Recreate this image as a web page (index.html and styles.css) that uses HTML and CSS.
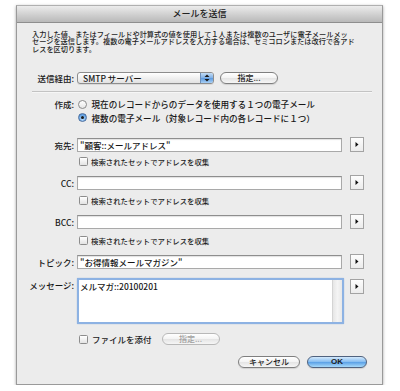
FILE: index.html
```
<!DOCTYPE html>
<html lang="ja">
<head>
<meta charset="utf-8">
<link rel="stylesheet" href="styles.css">
</head>
<body>
<div class="win">
  <div class="titlebar">メールを送信</div>
  <div class="content">
    <div class="desc">
      <div class="dline">入力した値、またはフィールドや計算式の値を使用して１人または複数のユーザに電子メールメッ</div>
      <div class="dline">セージを送信します。複数の電子メールアドレスを入力する場合は、セミコロンまたは改行で各アド</div>
      <div class="dline">レスを区切ります。</div>
    </div>

    <div class="row via">
      <span class="label">送信経由:</span>
      <div class="popup"><span class="popup-text">SMTP サーバー</span><span class="stepper"><svg width="6" height="8" viewBox="0 0 6 8"><path d="M3 0.5L5.5 3H0.5z M3 7.5L5.5 5H0.5z" fill="#1a1a1a"/></svg></span></div>
      <span class="btn btn-spec">指定...</span>
    </div>

    <div class="sep"></div>

    <div class="row opt opt1">
      <span class="label">作成:</span>
      <span class="radio"></span>
      <span class="opt-text">現在のレコードからのデータを使用する１つの電子メール</span>
    </div>
    <div class="row opt opt2">
      <span class="label"></span>
      <span class="radio on"><span class="dot"></span></span>
      <span class="opt-text">複数の電子メール（対象レコード内の各レコードに１つ）</span>
    </div>

    <div class="row field-row to">
      <span class="label">宛先:</span>
      <div class="field">"顧客::メールアドレス"</div>
      <span class="arrow"><svg width="4" height="5" viewBox="0 0 4 5"><path d="M0.5 0L3.5 2.5L0.5 5z" fill="#111"/></svg></span>
    </div>
    <div class="row check-row c1">
      <span class="label"></span>
      <span class="check"></span>
      <span class="check-text">検索されたセットでアドレスを収集</span>
    </div>

    <div class="row field-row cc">
      <span class="label">CC:</span>
      <div class="field"></div>
      <span class="arrow"><svg width="4" height="5" viewBox="0 0 4 5"><path d="M0.5 0L3.5 2.5L0.5 5z" fill="#111"/></svg></span>
    </div>
    <div class="row check-row c2">
      <span class="label"></span>
      <span class="check"></span>
      <span class="check-text">検索されたセットでアドレスを収集</span>
    </div>

    <div class="row field-row bcc">
      <span class="label">BCC:</span>
      <div class="field"></div>
      <span class="arrow"><svg width="4" height="5" viewBox="0 0 4 5"><path d="M0.5 0L3.5 2.5L0.5 5z" fill="#111"/></svg></span>
    </div>
    <div class="row check-row c3">
      <span class="label"></span>
      <span class="check"></span>
      <span class="check-text">検索されたセットでアドレスを収集</span>
    </div>

    <div class="row field-row topic">
      <span class="label">トピック:</span>
      <div class="field">"お得情報メールマガジン"</div>
      <span class="arrow"><svg width="4" height="5" viewBox="0 0 4 5"><path d="M0.5 0L3.5 2.5L0.5 5z" fill="#111"/></svg></span>
    </div>

    <div class="row msg-row">
      <span class="label">メッセージ:</span>
      <div class="msg"><span class="msg-text">メルマガ::20100201</span><span class="scroll"></span></div>
      <span class="arrow"><svg width="4" height="5" viewBox="0 0 4 5"><path d="M0.5 0L3.5 2.5L0.5 5z" fill="#111"/></svg></span>
    </div>

    <div class="row file-row">
      <span class="label"></span>
      <span class="check"></span>
      <span class="check-text file-text">ファイルを添付</span>
      <span class="btn btn-disabled">指定...</span>
    </div>

    <div class="actions">
      <span class="btn btn-cancel">キャンセル</span>
      <span class="btn btn-ok">OK</span>
    </div>
    <div class="grip"><svg width="9" height="9" viewBox="0 0 9 9"><path d="M8.5 1.5L1.5 8.5M8.5 4.5L4.5 8.5M8.5 7L7 8.5" stroke="#a8a8a8" stroke-width="0.8"/></svg></div>
  </div>
</div>
</body>
</html>
```
FILE: styles.css
```
* { box-sizing: border-box; }
html, body { margin: 0; padding: 0; background: #ffffff; }
body {
  padding: 5px 0 0 16px;
  font-family: "Noto Sans CJK JP", "Noto Sans", sans-serif;
  font-weight: 500;
  color: #161616;
}
.win {
  position: relative;
  width: 367px;
  height: 380px;
  background: #ececec;
  border: 1px solid #9a9a9a;
  border-top-color: #b0b0b0;
  box-shadow: 0 1px 3px rgba(0,0,0,0.35);
  display: flex;
  flex-direction: column;
}
.titlebar {
  height: 17px;
  flex: none;
  background: linear-gradient(#ececec, #d2d2d2 50%, #b9b9b9);
  border-bottom: 1px solid #8e8e8e;
  text-align: center;
  font-size: 9px;
  line-height: 16px;
  color: #222;
}
.content {
  position: relative;
  flex: 1;
  display: flex;
  flex-direction: column;
}
.desc {
  margin: 7.5px 0 0 15px;
  flex: none;
}
.dline {
  height: 7.5px;
  font-size: 7.2px;
  line-height: 7.5px;
  white-space: nowrap;
  color: #1e1e1e;
}
.row {
  display: flex;
  align-items: center;
  flex: none;
}
.label {
  width: 60px;
  flex: none;
  text-align: right;
  font-size: 8.5px;
  line-height: 12px;
  padding-right: 3px;
  white-space: nowrap;
}
.via { margin-top: 18px; height: 13px; }
.popup {
  width: 137px;
  height: 12px;
  border: 1px solid #8d8d8d;
  border-radius: 3px;
  background: linear-gradient(#ffffff, #f0f0f0 50%, #e2e2e2);
  display: flex;
  align-items: center;
  overflow: hidden;
  box-shadow: 0 1px 0 rgba(0,0,0,0.08);
}
.popup-text {
  flex: 1;
  font-size: 8.5px;
  line-height: 10px;
  padding-left: 5px;
  white-space: nowrap;
}
.stepper {
  width: 13px;
  height: 100%;
  background: linear-gradient(#c3dcf5, #7fb0e6 50%, #5a98de 51%, #a9d0f5);
  border-left: 1px solid #6e8fb8;
  display: flex;
  align-items: center;
  justify-content: center;
}
.btn {
  display: flex;
  align-items: center;
  justify-content: center;
  height: 12px;
  border: 1px solid #7f7f7f;
  border-radius: 7px;
  background: linear-gradient(#ffffff, #f3f3f3 50%, #e4e4e4 51%, #f6f6f6);
  font-size: 8px;
  line-height: 10px;
  color: #1c1c1c;
  box-shadow: 0 1px 1px rgba(0,0,0,0.12);
}
.btn-spec { width: 58px; margin-left: 6px; }
.sep {
  margin: 6.5px 10px 0 15px;
  height: 1px;
  background: #c3c3c3;
  border-bottom: 1px solid #f6f6f6;
  box-sizing: content-box;
  flex: none;
}
.opt { height: 12px; }
.opt1 { margin-top: 5.5px; }
.opt2 { margin-top: 1.5px; }
.radio {
  width: 9px;
  height: 9px;
  border-radius: 50%;
  border: 1px solid #8a8a8a;
  background: linear-gradient(#ffffff, #e6e6e6);
  margin-left: 1px;
  flex: none;
  display: flex;
  align-items: center;
  justify-content: center;
}
.radio.on {
  border-color: #4b6e9e;
  background: radial-gradient(circle at 50% 70%, #bfe0ff, #6aa7e6 60%, #4a86cc);
}
.dot {
  width: 3.5px;
  height: 3.5px;
  border-radius: 50%;
  background: #1a1a1a;
}
.opt-text {
  font-size: 8.6px;
  line-height: 12px;
  margin-left: 4.5px;
  white-space: nowrap;
}
.field-row { height: 15px; }
.to { margin-top: 13.5px; }
.cc { margin-top: 7.5px; }
.bcc { margin-top: 7.5px; }
.topic { margin-top: 7.5px; }
.field {
  width: 265px;
  height: 14px;
  background: #ffffff;
  border: 1px solid #a9a9a9;
  border-top-color: #8e8e8e;
  box-shadow: inset 0 1px 1px rgba(0,0,0,0.12);
  font-size: 8.5px;
  line-height: 12px;
  padding-left: 2px;
  white-space: nowrap;
}
.arrow {
  width: 14px;
  height: 15px;
  margin-left: 8px;
  border: 1px solid #a3a3a3;
  background: linear-gradient(#fdfdfd, #ececec);
  display: flex;
  align-items: center;
  justify-content: center;
  flex: none;
}
.check-row { height: 12px; }
.c1 { margin-top: 3.5px; }
.c2 { margin-top: 4.5px; }
.c3 { margin-top: 5.5px; }
.check {
  width: 9px;
  height: 9px;
  border: 1px solid #8c8c8c;
  border-radius: 1.5px;
  background: linear-gradient(#ffffff, #e3e3e3);
  margin-left: 2px;
  flex: none;
}
.check-text {
  font-size: 7.4px;
  line-height: 12px;
  margin-left: 3px;
  white-space: nowrap;
  color: #222;
}
.msg-row {
  margin-top: 9px;
  height: 46px;
  align-items: flex-start;
}
.msg-row .label { line-height: 14px; }
.msg {
  width: 267px;
  height: 46px;
  background: #ffffff;
  border: 2px solid #8db2e3;
  border-radius: 1px;
  box-shadow: 0 0 1px #6a95d3;
  display: flex;
  justify-content: space-between;
}
.msg-text {
  font-size: 8.5px;
  line-height: 12px;
  padding-left: 1px;
  white-space: nowrap;
}
.scroll {
  width: 10px;
  height: 100%;
  background: linear-gradient(90deg, #e6e6e6, #f4f4f4 50%, #e8e8e8);
  border-left: 1px solid #d4d4d4;
}
.msg-row .arrow { margin-left: 6px; margin-top: 1px; }
.file-row { margin-top: 9px; height: 12px; }
.file-text { font-size: 8.5px; margin-left: 4px; }
.btn-disabled {
  width: 58px;
  margin-left: 10px;
  color: #a0a0a0;
  border-color: #b8b8b8;
  box-shadow: none;
}
.actions {
  display: flex;
  justify-content: flex-end;
  gap: 7px;
  margin-top: 11px;
  padding-right: 15px;
  flex: none;
}
.btn-cancel { width: 62px; }
.btn-ok {
  width: 60px;
  border-color: #50627e;
  background: linear-gradient(#d3e9fc, #86bdf0 48%, #5aa0e6 52%, #a8dafa);
  font-weight: bold;
  font-family: "Liberation Sans", sans-serif;
}
.grip {
  position: absolute;
  right: 0;
  bottom: 0;
  width: 10px;
  height: 10px;
}
```
